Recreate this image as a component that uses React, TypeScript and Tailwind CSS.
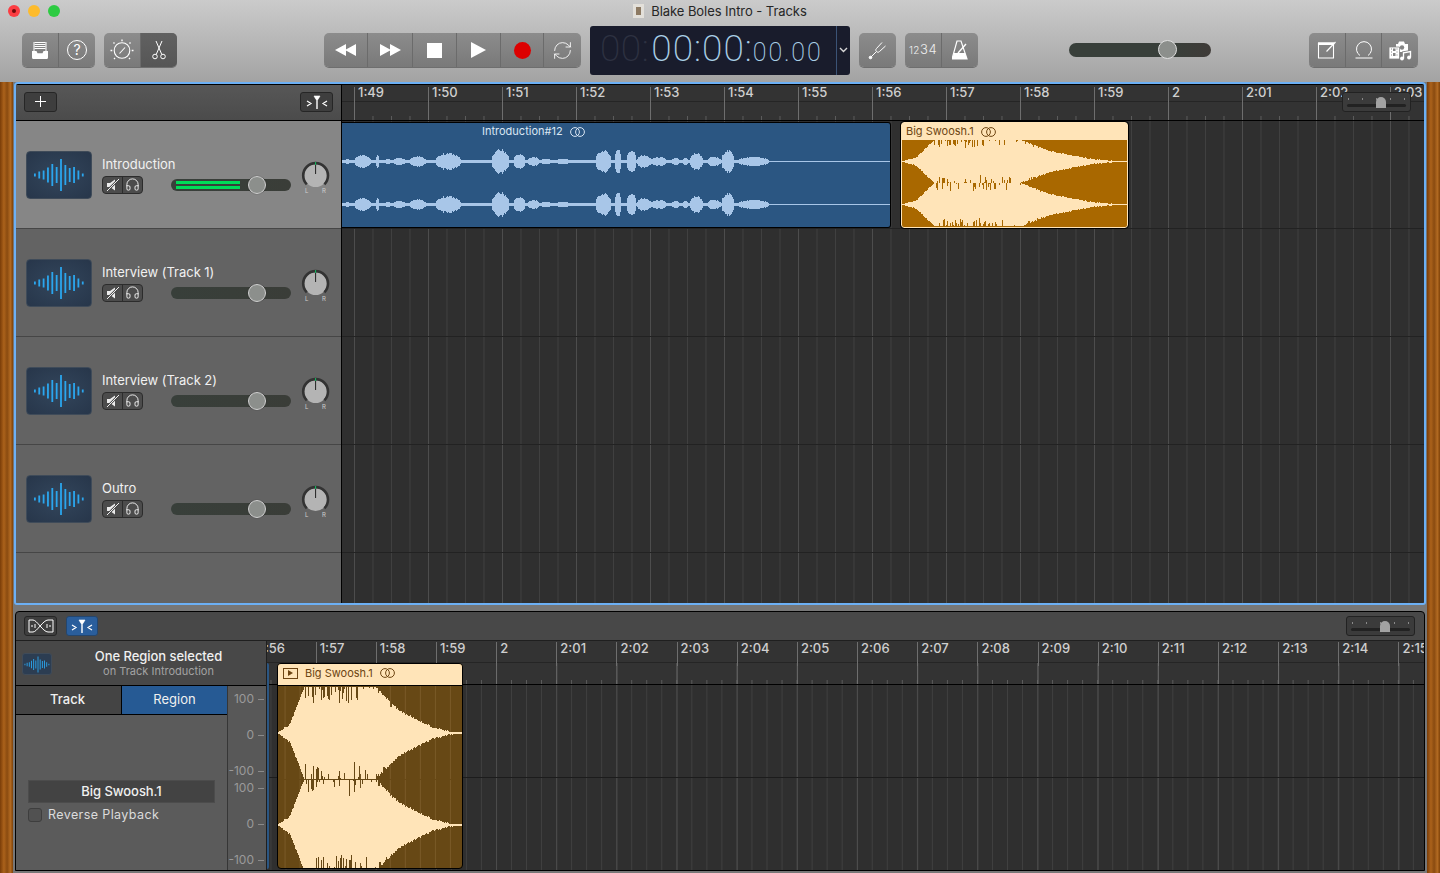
import type { ReactNode } from 'react'
import { Headphones, RefreshCw } from 'lucide-react'

const TRACKS = ['Introduction', 'Interview (Track 1)', 'Interview (Track 2)', 'Outro']
const TOP_TIMES = ['1:49','1:50','1:51','1:52','1:53','1:54','1:55','1:56','1:57','1:58','1:59','2','2:01','2:02','2:03']
const EDIT_TIMES = ['1:56','1:57','1:58','1:59','2','2:01','2:02','2:03','2:04','2:05','2:06','2:07','2:08','2:09','2:10','2:11','2:12','2:13','2:14','2:15']

// blobs of the spoken take: start x, end x, amplitude (px from region left)
const BLOBS = [
  [2,8,3],[12,29,7],[33,37,7],[43,49,3],[50,64,4],[67,84,6],[93,119,9],
  [149,167,13],[171,183,8],[185,197,5],[198,209,3],[213,229,3],
  [253,269,12],[272,279,13],[284,294,12],[294,309,7],[308,324,5],[329,337,4],[340,346,4],
  [347,361,9],[364,379,5],[379,392,12],[392,393,15],[395,427,5],
]

const rnd = (i: number) => {
  const v = Math.sin(i * 12.9898) * 43758.5453
  return v - Math.floor(v)
}

function introPath(width: number, cy: number) {
  let d = ''
  for (let x = 0; x < width; x++) {
    let a = x < 427 ? 1 + rnd(x + 5) * 0.8 : 0
    BLOBS.forEach(([s, e, amp]) => {
      if (x >= s && x <= e) {
        const u = (x - s) / (e - s)
        a = Math.max(a, amp * Math.pow(Math.sin(Math.PI * u), 0.45) * (0.76 + rnd(x) * 0.24))
      }
    })
    if (a > 1) d += `M${x + 0.5} ${Math.round(cy - a)}V${Math.round(cy + a)}`
  }
  return d
}

function swooshEnv(t: number) {
  if (t < 0.06) return 0.03 + t * 3
  if (t < 0.145) return 0.2 + ((t - 0.06) / 0.085) * 0.85
  if (t < 0.52) return 1.05
  if (t < 0.66) return 1.05 - ((t - 0.52) / 0.14) * 0.55
  if (t < 0.84) return 0.5 - ((t - 0.66) / 0.18) * 0.36
  return Math.max(0.015, 0.14 - ((t - 0.84) / 0.14) * 0.125)
}

function swooshPath(width: number, height: number, cy: number, seed: number) {
  let d = ''
  for (let x = 0; x < width; x++) {
    const t = x / width
    const env = swooshEnv(t)
    const cut = (i: number) => {
      const r = rnd(x * 7 + seed + i)
      return t > 0.14 && t < 0.62 && r > 0.62 ? (r - 0.62) * (t < 0.5 ? 1.1 : 0.35) : rnd(x + i) * 0.04
    }
    const up = Math.max(0.015, Math.min(1, env - cut(1))) * height
    const down = Math.max(0.015, Math.min(1, env - cut(2))) * height
    d += `M${x + 0.5} ${(cy - up).toFixed(1)}V${(cy + down).toFixed(1)}`
  }
  return d
}

function Wood() {
  return <div className="h-full w-[13px] shrink-0 bg-[linear-gradient(to_right,#7a3d08,#ab621b_30%,#8a4b10_55%,#b26a22_80%,#7f4208)]" />
}

function Group({ children, className = '' }: { children: ReactNode; className?: string }) {
  return (
    <div className={`flex h-[34px] overflow-hidden rounded-[5px] bg-[linear-gradient(#8c8c8c,#797979)] shadow-[0_1px_0_#6e6e6e] ${className}`}>
      {children}
    </div>
  )
}

function Cell({ children, last, dark, className = 'flex-1' }: { children: ReactNode; last?: boolean; dark?: boolean; className?: string }) {
  return (
    <div className={`flex h-full shrink-0 items-center justify-center text-white ${className} ${last ? '' : 'border-r border-[#6b6b6b]'} ${dark ? 'bg-[linear-gradient(#616161,#565656)]' : ''}`}>
      {children}
    </div>
  )
}

function Wave({ size = 'lg' }: { size?: 'lg' | 'sm' }) {
  const bars = [3, 7, 9, 15, 22, 16, 32, 20, 14, 16, 9, 3]
  return (
    <svg width={size === 'lg' ? 52 : 26} height={size === 'lg' ? 34 : 17} viewBox="0 0 52 34">
      {bars.map((h, i) => (
        <rect key={i} x={1 + i * 4.35} y={17 - h / 2} width="1.8" height={h} fill="#2ba6ee" />
      ))}
    </svg>
  )
}

function Loops({ color }: { color: string }) {
  return (
    <svg width="15" height="10" viewBox="0 0 15 10" fill="none" stroke={color} strokeWidth="1">
      <circle cx="5" cy="5" r="4.4" />
      <circle cx="10" cy="5" r="4.4" />
    </svg>
  )
}

function FilterIcon() {
  return (
    <svg width="22" height="14" viewBox="0 0 22 14" fill="none" stroke="#fff">
      <path d="M1 6l4 2.5-4 2.5M21 6l-4 2.5 4 2.5" strokeWidth="1.2" />
      <path d="M8 1h6l-2 3.5h-2z" fill="#fff" strokeWidth="0.6" />
      <path d="M11 3v11" strokeWidth="1.4" />
    </svg>
  )
}

function ZoomSlider({ className = '', pos }: { className?: string; pos: string }) {
  return (
    <div className={`flex h-[20px] w-[69px] flex-col justify-center rounded-[3px] border border-[#222] bg-[#3b3b3b] px-[4px] ${className}`}>
      <div className="mx-[1px] mb-[4px] h-[2px] bg-[linear-gradient(to_right,#8a8a8a_1px,transparent_1px)] bg-[size:14px_2px]" />
      <div className="relative h-[3px] w-full rounded bg-[#222]">
        <div className={`absolute top-[-7px] h-[11px] w-[10px] rounded-t-full rounded-b-[2px] bg-[#a2a2a2] ${pos}`} />
      </div>
    </div>
  )
}

function TrackVolume({ meter }: { meter?: boolean }) {
  return (
    <div className="relative ml-[28px] h-[12px] w-[120px] rounded-full bg-[linear-gradient(to_right,#383f3a,#3a3d38)]">
      {meter && (
        <div className="ml-[5px] flex w-[64px] flex-col gap-[2px] pt-[2px]">
          <div className="h-[3px] bg-[#00db58]" />
          <div className="h-[3px] bg-[#00db58]" />
        </div>
      )}
      <div className="absolute left-[77px] top-[-3px] h-[18px] w-[18px] rounded-full border-[1.5px] border-[#d2d2d2] bg-[#8c8f8c] shadow-[0_0_1px_#222]" />
    </div>
  )
}

function PanKnob() {
  return (
    <svg width="30" height="36" viewBox="0 0 30 36" className="mt-[7px]">
      <circle cx="15.6" cy="15.5" r="11.5" fill="#b4b4b4" />
      <path d="M6.8 24.3A12.4 12.4 0 1 1 24.4 24.3" fill="none" stroke="#333" strokeWidth="2.6" />
      <path d="M15.6 3v11" stroke="#222" strokeWidth="1" />
      <path d="M15.6 2v3" stroke="#12c060" strokeWidth="1" />
      <text x="5" y="33" fontSize="6" fill="#cfcfcf" fontFamily="Inter">L</text>
      <text x="22" y="33" fontSize="6" fill="#cfcfcf" fontFamily="Inter">R</text>
    </svg>
  )
}

function Speaker() {
  return (
    <svg width="15" height="14" viewBox="0 0 15 14" fill="#ececec">
      <path d="M2 5h3l5-3.500v11l-5-3.500H2z" />
      <path d="M14 1L2 13" stroke="#4a4a4a" strokeWidth="2.4" />
      <path d="M14 1L2 13" stroke="#ececec" strokeWidth="1" />
    </svg>
  )
}

function TrackHeader({ name, selected }: { name: string; selected: boolean }) {
  return (
    <div className={`flex h-[108px] items-center border-b border-[#464646] pl-[10px] pr-[11px] ${selected ? 'bg-[#868686]' : 'bg-[#636363]'}`}>
      <div className="flex h-[48px] w-[66px] shrink-0 items-center justify-center rounded-[4px] border border-[#3f4b59] bg-[radial-gradient(#33465c,#27364a)]">
        <Wave />
      </div>
      <div className="ml-[10px] w-[189px]">
        <div className="h-[16px] whitespace-nowrap text-[13px] leading-[16px] tracking-[-0.03px] text-[#f1f1f1]">{name}</div>
        <div className="mt-[4px] flex h-[18px] items-center">
          <div className="flex h-[18px] w-[41px] shrink-0 rounded-[4px] border border-[#2c2c2c] bg-[#4c4c4c]">
            <div className="flex flex-1 items-center justify-center border-r border-[#2c2c2c]"><Speaker /></div>
            <div className="flex flex-1 items-center justify-center text-white"><Headphones size={15} strokeWidth={1.4} /></div>
          </div>
          <TrackVolume meter={selected} />
        </div>
      </div>
      <div className="ml-auto"><PanKnob /></div>
    </div>
  )
}

function TopRuler() {
  return (
    <div className="h-[36px] shrink-0 overflow-hidden border-b border-black bg-[#333]">
      <div className="flex h-[17px] border-b border-[#252525] pl-[12px] pt-[2px]">
        {TOP_TIMES.map(t => (
          <div key={t} className="h-[20px] w-[74px] shrink-0 border-l border-[#6e6e6e] pl-[3px] text-[13px] font-medium leading-[11px] text-[#cfcfcf]">{t}</div>
        ))}
      </div>
      <div className="h-[18px] bg-[linear-gradient(to_right,#6e6e6e_1px,transparent_1px),linear-gradient(to_right,#5c5c5c_1px,transparent_1px)] bg-[size:74px_100%,18.5px_4px] bg-[position:12px_0,12px_bottom] bg-repeat-x" />
    </div>
  )
}

function EditRuler() {
  return (
    <div className="h-[44px] shrink-0 overflow-hidden border-b border-black bg-[#333]">
      <div className="ml-[-11.5px] flex h-[22px] border-b border-[#252525] pt-[1px]">
        {EDIT_TIMES.map(t => (
          <div key={t} className="h-[24px] w-[60.16px] shrink-0 border-l border-[#6e6e6e] pl-[3px] text-[13px] font-medium leading-[12px] text-[#cfcfcf]">{t}</div>
        ))}
      </div>
      <div className="h-[21px] bg-[linear-gradient(to_right,#6e6e6e_1px,transparent_1px),linear-gradient(to_right,#5c5c5c_1px,transparent_1px)] bg-[size:60.16px_100%,15.04px_4px] bg-[position:48.6px_0,48.6px_bottom] bg-repeat-x" />
    </div>
  )
}

function Toolbar() {
  return (
    <div className="h-[82px] shrink-0 bg-[linear-gradient(#cbcbcb,#a3a3a3)]">
      <div className="relative flex h-[22px] items-center justify-center">
        <div className="absolute left-[8px] top-[5px] flex gap-[8px]">
          <div className="flex h-[12px] w-[12px] items-center justify-center rounded-full bg-[#fc3d42]"><div className="h-[4px] w-[4px] rounded-full bg-[#6e0b0b]" /></div>
          <div className="h-[12px] w-[12px] rounded-full bg-[#fdbb2c]" />
          <div className="h-[12px] w-[12px] rounded-full bg-[#2dcb42]" />
        </div>
        <div className="mr-[7px] h-[14px] w-[11px] bg-[#e3e0da] p-[3px]"><div className="h-full bg-[#8d7a63]" /></div>
        <span className="text-[13px] leading-[22px] tracking-[-0.06px] text-[#262626]">Blake Boles Intro - Tracks</span>
      </div>
      <div className="flex h-[56px] items-center pl-[22px]">
        <Group className="w-[73px]">
          <Cell>
            <svg width="18" height="19" viewBox="0 0 18 19" fill="#fff">
              <path d="M3.5 1.5h11M3.5 3.5h11M3.5 5.5h11M3.5 7.5h11" stroke="#fff" strokeWidth="1.1" />
              <path d="M2.5 1h1v9h-1zM14.5 1h1v9h-1z" />
              <path d="M1 10h4.5l1 2.2h5l1-2.2H17v6.5a1.5 1.5 0 0 1-1.5 1.5h-13A1.5 1.5 0 0 1 1 16.500z" />
            </svg>
          </Cell>
          <Cell last>
            <div className="flex h-[20px] w-[20px] items-center justify-center rounded-full border-[1.2px] border-white text-[14px] leading-none">?</div>
          </Cell>
        </Group>
        <Group className="ml-[9px] w-[73px]">
          <Cell>
            <svg width="24" height="24" viewBox="0 0 24 24" fill="none" stroke="#fff">
              <circle cx="12" cy="12.5" r="7.8" strokeWidth="1.1" />
              <path d="M9.500 15.500l5.500-6" strokeWidth="1.1" />
              <path d="M12 1.500v1.800M3.500 4.500l1 1M20.500 4.500l-1 1M.5 12.500h1.800M21.700 12.500h1.800M4 21l1-1M20 21l-1-1" strokeWidth="1.4" />
            </svg>
          </Cell>
          <Cell last dark>
            <svg width="14" height="20" viewBox="0 0 14 20" fill="none" stroke="#fff" strokeWidth="1">
              <circle cx="3" cy="16.500" r="2.3" />
              <circle cx="11" cy="16.500" r="2.3" />
              <path d="M4.200 14.500L10 1M9.800 14.500L4 1" />
            </svg>
          </Cell>
        </Group>
        <Group className="ml-[147px] w-[257px]">
          <Cell className="w-[44px]"><svg width="22" height="12" viewBox="0 0 22 12" fill="#fff"><path d="M0 6l11-6v12zM10 6l11-6v12z" /></svg></Cell>
          <Cell className="w-[44.5px]"><svg width="22" height="12" viewBox="0 0 22 12" fill="#fff" className="ml-[1px]"><path d="M22 6l-11-6v12zM12 6l-11-6v12z" /></svg></Cell>
          <Cell className="w-[44px]"><div className="h-[15px] w-[15px] bg-white" /></Cell>
          <Cell className="w-[44px]"><svg width="15" height="16" viewBox="0 0 15 16" fill="#fff" className="ml-[1px]"><path d="M0 0l15 8-15 8z" /></svg></Cell>
          <Cell className="w-[43.5px]"><div className="ml-[1px] h-[17px] w-[17px] rounded-full bg-[#dd0000]" /></Cell>
          <Cell last className="flex-1"><RefreshCw size={21} strokeWidth={1} /></Cell>
        </Group>
        <div className="ml-[9px] flex h-[49px] w-[260px] items-center rounded-[3px] bg-[#191c2c] pl-[10px] font-['Roboto',sans-serif] font-extralight text-[#a9cfe6]">
          <div className="flex w-[236px] items-baseline whitespace-nowrap pt-[2px]">
            <span className="text-[37px] leading-[44px] tracking-[0.5px] text-[#2d3141]">00:</span>
            <span className="ml-[2px] text-[37px] leading-[44px] tracking-[1px]">00:00:</span>
            <span className="text-[25px] leading-[44px] tracking-[1.8px]">00.00</span>
          </div>
          <div className="flex h-full flex-1 items-center justify-center border-l border-[#3b5376]">
            <svg width="9" height="6" viewBox="0 0 9 6" fill="none" stroke="#d8d8d8" strokeWidth="1.4"><path d="M1 1l3.500 3.500L8 1" /></svg>
          </div>
        </div>
        <Group className="ml-[9px] w-[37px]">
          <Cell last>
            <svg width="20" height="20" viewBox="0 0 20 20" fill="none" stroke="#fff" strokeWidth="1">
              <path d="M2.500 17.500L8.500 11.500" />
              <path d="M8.500 11.500c-1-1-1-2 0-3L14 2.500M8.500 11.500c1 1 2 1 3 0L17.500 6" />
              <circle cx="2.500" cy="17.500" r="1.300" fill="#fff" />
            </svg>
          </Cell>
        </Group>
        <Group className="ml-[9px] w-[73px]">
          <Cell className="w-[37px]"><span className="text-[13px] font-light tracking-[0.5px] text-[#eee]"><span className="text-[10px]">12</span>34</span></Cell>
          <Cell last>
            <svg width="16" height="20" viewBox="0 0 16 20" fill="#fff">
              <path d="M5 1h4l6 18H0z" fill="none" stroke="#fff" strokeWidth="1.2" />
              <path d="M2 13h11l2 6H0z" />
              <path d="M6 13L14 4" stroke="#fff" strokeWidth="1.4" />
            </svg>
          </Cell>
        </Group>
        <div className="relative ml-[91px] h-[14px] w-[142px] rounded-full bg-[linear-gradient(to_right,#383f3a_70%,#3f3b38)]">
          <div className="absolute left-[89px] top-[-3.5px] h-[19px] w-[19px] rounded-full border-[1.5px] border-[#e0e0e0] bg-[#8c8f8c]" />
        </div>
        <Group className="ml-[98px] w-[109px]">
          <Cell>
            <svg width="20" height="20" viewBox="0 0 20 20" fill="none" stroke="#fff" strokeWidth="1.1">
              <path d="M1.500 3h15v15h-15z" />
              <path d="M1.500 3h15v1.500h-15z" fill="#fff" />
              <path d="M9.500 11.500L18.500 2" />
            </svg>
          </Cell>
          <Cell>
            <svg width="20" height="20" viewBox="0 0 20 20" fill="none" stroke="#fff" strokeWidth="1">
              <path d="M6 15.500A7.500 7.500 0 1 1 14 15.500" />
              <path d="M1.500 18h17" />
            </svg>
          </Cell>
          <Cell last>
            <svg width="24" height="21" viewBox="0 0 24 21" fill="#fff">
              <path d="M8 4h2l1-2.500h5l1 2.500h3v8H8z" />
              <circle cx="14" cy="7.500" r="2.200" fill="#848484" />
              <path d="M1 7h10.500v12H1z" stroke="#848484" strokeWidth="0.8" />
              <path d="M3 8.500h1v1H3zM3 11.500h1v1H3zM3 14.500h1v1H3zM8.500 8.500h1v1h-1zM8.500 11.500h1v1h-1zM8.500 14.500h1v1h-1zM5 8.500h2.500v2.500H5zM5 13h2.500v3H5z" fill="#848484" />
              <path d="M15.500 18.500V12.800l7-1.300V17.500" fill="none" stroke="#848484" strokeWidth="3" />
              <path d="M15.500 18.500V12.800l7-1.300V17.500" fill="none" stroke="#fff" strokeWidth="1.300" />
              <circle cx="14" cy="18.500" r="1.900" />
              <circle cx="21" cy="17.500" r="1.900" />
            </svg>
          </Cell>
        </Group>
      </div>
    </div>
  )
}

function TracksPanel() {
  return (
    <div className="relative flex h-[523px] shrink-0 flex-col overflow-hidden rounded-t-[4px] rounded-b-[3px] border-2 border-[#6cb0f5]">
      <div className="flex min-h-0 flex-1 border-t border-black">
        <div className="flex w-[326px] shrink-0 flex-col border-r border-black bg-[#636363]">
          <div className="flex h-[36px] shrink-0 items-center justify-between border-b border-black bg-[linear-gradient(#575757,#4b4b4b)] px-[8px] pb-[2px]">
            <div className="flex h-[20px] w-[33px] items-center justify-center rounded-[3px] border border-[#262626] bg-[#3e3e3e]">
              <svg width="13" height="13" viewBox="0 0 13 13" stroke="#fff" strokeWidth="1"><path d="M6.500 1v11M1 6.500h11" /></svg>
            </div>
            <div className="flex h-[20px] w-[33px] items-center justify-center rounded-[3px] border border-[#262626] bg-[#3e3e3e]"><FilterIcon /></div>
          </div>
          {TRACKS.map((t, i) => <TrackHeader key={t} name={t} selected={i === 0} />)}
        </div>
        <div className="flex min-w-0 flex-1 flex-col bg-[#2f2f2f]">
          <TopRuler />
          <div className="min-h-0 flex-1 bg-[linear-gradient(to_right,#4d4d4d_1px,transparent_1px),linear-gradient(to_right,#404040_1px,transparent_1px)] bg-[size:74px_100%,18.5px_100%] bg-[position:12px_0,12px_0]">
            <div className="flex h-[108px] items-start gap-[10px] border-b border-[#222] pt-[1px]">
              <div className="h-[106px] w-[549px] shrink-0 overflow-hidden rounded-r-[3px] border-y border-r border-black bg-[#2b5682]">
                <div className="flex h-[17px] items-center pl-[140px] text-[11px] text-[#dbe7f4]">
                  <span>Introduction#12</span>
                  <span className="ml-[7px]"><Loops color="#dbe7f4" /></span>
                </div>
                <svg width="548" height="87" className="block">
                  <path d={`M0 21.500H548M0 64.500H548`} stroke="#a8c6e8" strokeWidth="1" />
                  <path d={introPath(548, 21.5)} stroke="#a8c6e8" strokeWidth="1" shapeRendering="crispEdges" />
                  <path d={introPath(548, 64.5)} stroke="#a8c6e8" strokeWidth="1" shapeRendering="crispEdges" />
                </svg>
              </div>
              <div className="h-[106px] w-[227px] shrink-0 overflow-hidden rounded-[3px] border border-[#ffe4b8] bg-[#ffe4b8] outline outline-black">
                <div className="flex h-[17px] items-center pl-[4px] text-[11px] text-[#6d4412]">
                  <span>Big Swoosh.1</span>
                  <span className="ml-[7px]"><Loops color="#6d4412" /></span>
                </div>
                <svg width="225" height="87" className="block bg-[#a96800]">
                  <path d={swooshPath(225, 21.5, 21.5, 3)} stroke="#ffe4b8" strokeWidth="1" shapeRendering="crispEdges" />
                  <path d={swooshPath(225, 21.5, 64.5, 91)} stroke="#ffe4b8" strokeWidth="1" shapeRendering="crispEdges" />
                  <path d="M0 21.500H225M0 64.500H225" stroke="#ffe4b8" strokeWidth="1" />
                </svg>
              </div>
            </div>
            <div className="h-[108px] border-b border-[#222]" />
            <div className="h-[108px] border-b border-[#222]" />
            <div className="h-[108px] border-b border-[#222]" />
          </div>
        </div>
      </div>
      <ZoomSlider className="absolute right-[13px] top-[8px]" pos="left-[29px]" />
    </div>
  )
}

function Scale({ labels }: { labels: string[] }) {
  return (
    <div className="flex h-[86px] flex-col justify-between">
      {labels.map((l, i) => (
        <div key={i} className="flex h-[14px] items-center justify-end text-[12px] leading-[14px] text-[#9a9a9a]">
          <span>{l}</span>
          <span className="ml-[4px] h-px w-[6px] bg-[#8a8a8a]" />
        </div>
      ))}
    </div>
  )
}

function Editor() {
  return (
    <div className="mx-px mt-[6px] flex h-[260px] shrink-0 flex-col overflow-hidden rounded-t-[4px] border border-black bg-[#484848]">
      <div className="flex h-[29px] shrink-0 items-center border-b border-[#1f1f1f] px-[8px]">
        <div className="flex h-[20px] w-[33px] items-center justify-center rounded-[3px] border border-[#262626] bg-[#3e3e3e]">
          <svg width="26" height="14" viewBox="0 0 26 14" fill="none" stroke="#fff" strokeWidth="1">
            <path d="M1 1v12h4C9 13 15 1 20 1h5v12h-5C15 13 9 1 5 1z" />
            <path d="M4 6v2M7 5v4M19 5v4M22 6v2" />
          </svg>
        </div>
        <div className="ml-[9px] flex h-[20px] w-[32px] items-center justify-center rounded-[3px] border border-[#24466e] bg-[#2a5e9c]"><FilterIcon /></div>
        <ZoomSlider className="ml-auto mr-[1px]" pos="left-[29px]" />
      </div>
      <div className="flex min-h-0 flex-1">
        <div className="flex w-[251px] shrink-0 flex-col border-r border-[#1f1f1f]">
          <div className="flex h-[45px] shrink-0 border-b border-black pl-[6px]">
            <div className="mt-[12px] flex h-[22px] w-[30px] items-center justify-center rounded-[3px] border border-[#3f4b59] bg-[#2c3d52]"><Wave size="sm" /></div>
            <div className="ml-[4px] flex w-[205px] flex-col items-center pt-[7px]">
              <div className="text-[13px] font-medium leading-[16px] tracking-[-0.05px] text-[#f0f0f0]">One Region selected</div>
              <div className="text-[11px] leading-[14px] text-[#a3a3a3]">on Track Introduction</div>
            </div>
          </div>
          <div className="flex min-h-0 flex-1">
            <div className="flex w-[212px] shrink-0 flex-col border-r border-[#363636] bg-[#5b5b5b]">
              <div className="flex h-[29px] shrink-0 border-b border-black text-[13px] text-[#f0f0f0]">
                <div className="flex w-[106px] items-center justify-center border-r border-black bg-[#444] pr-[2px] font-medium">Track</div>
                <div className="flex flex-1 items-center justify-center bg-[#265a94]">Region</div>
              </div>
              <div className="ml-[12px] mt-[65px] flex h-[23px] w-[187px] items-center justify-center border border-[#4c4c4c] bg-[#434343] text-[13px] font-medium tracking-[-0.05px] text-[#f0f0f0]">Big Swoosh.1</div>
              <div className="ml-[12px] mt-[5px] flex items-center">
                <div className="h-[14px] w-[14px] rounded-[3px] border border-[#3e3e3e] bg-[#515151]" />
                <span className="ml-[6px] text-[12.500px] leading-[14px] tracking-[0.4px] text-[#dcdcdc]">Reverse Playback</span>
              </div>
            </div>
            <div className="flex-1 bg-[#585858] pr-[2px] pt-[6px]">
              <Scale labels={['100', '0', '-100']} />
              <div className="mt-[3px]"><Scale labels={['100', '0', '-100']} /></div>
            </div>
          </div>
        </div>
        <div className="relative min-w-0 flex-1 bg-[#2f2f2f]">
          <EditRuler />
          <div className="h-[185px] bg-[linear-gradient(to_right,#4c4c4c_1px,transparent_1px),linear-gradient(to_right,#404040_1px,transparent_1px)] bg-[size:60.16px_100%,15.04px_100%] bg-[position:48.6px_0,48.6px_0]">
            <div className="h-[93px] border-b border-[#1c1c1c]" />
          </div>
          <div className="absolute left-0 top-[22px] h-[206px] w-[2px] rounded-r bg-[#2b5682]" />
          <div className="absolute left-[10px] top-[22px] h-[206px] w-[186px] overflow-hidden rounded-[4px] border border-black bg-[#674815]">
            <div className="flex h-[22px] items-center border-b border-black bg-[#ffe4b8] pb-[3px] pl-[5px] text-[11px] text-[#6d4412]">
              <div className="flex h-[11px] w-[15px] items-center justify-center border border-[#6d4412]">
                <div className="h-0 w-0 border-y-[3px] border-l-[5px] border-y-transparent border-l-[#6d4412]" />
              </div>
              <span className="ml-[7px]">Big Swoosh.1</span>
              <span className="ml-[7px]"><Loops color="#6d4412" /></span>
            </div>
            <svg width="184" height="183" className="block bg-[linear-gradient(to_right,#7a5a28_1px,transparent_1px)] bg-[size:15.04px_100%] bg-[position:6.600px_0]">
              <path d={swooshPath(184, 46, 47, 17)} stroke="#ffe4b8" strokeWidth="1" shapeRendering="crispEdges" />
              <path d={swooshPath(184, 46, 139, 53)} stroke="#ffe4b8" strokeWidth="1" shapeRendering="crispEdges" />
              <path d="M0 93.500H184" stroke="#674815" strokeWidth="1" />
            </svg>
          </div>
        </div>
      </div>
    </div>
  )
}

export default function App() {
  return (
    <div className="flex h-[873px] w-[1440px] flex-col overflow-hidden bg-[#777] [font-family:Inter,'Liberation_Sans',sans-serif]">
      <Toolbar />
      <div className="flex min-h-0 flex-1">
        <Wood />
        <div className="flex min-w-0 flex-1 flex-col px-px">
          <TracksPanel />
          <Editor />
        </div>
        <Wood />
      </div>
    </div>
  )
}
